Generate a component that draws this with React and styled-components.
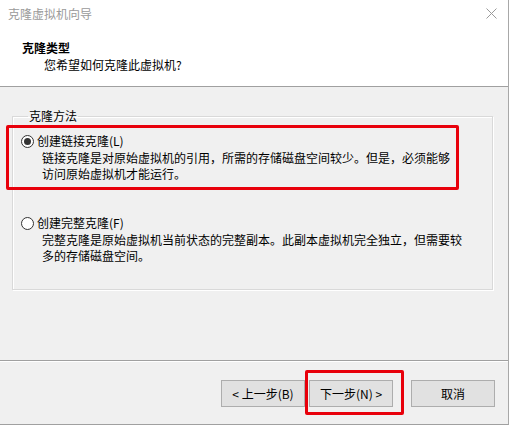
import React from "react";
import styled, { createGlobalStyle } from "styled-components";

const GlobalStyle = createGlobalStyle`
  html, body {
    margin: 0;
    padding: 0;
    background: #ffffff;
  }
  body {
    font-family: "Noto Sans CJK SC", "Microsoft YaHei", sans-serif;
    font-size: 12px;
    color: #000;
  }
`;

const options = [
  {
    id: "linked",
    label: "创建链接克隆(L)",
    lines: [
      "链接克隆是对原始虚拟机的引用，所需的存储磁盘空间较少。但是，必须能够",
      "访问原始虚拟机才能运行。",
    ],
    checked: true,
  },
  {
    id: "full",
    label: "创建完整克隆(F)",
    lines: [
      "完整克隆是原始虚拟机当前状态的完整副本。此副本虚拟机完全独立，但需要较",
      "多的存储磁盘空间。",
    ],
    checked: false,
  },
];

function App() {
  return (
    <>
      <GlobalStyle />
      <Window>
        <TitleBar>
          <Title>克隆虚拟机向导</Title>
          <CloseBtn>
            <svg width="11" height="11" viewBox="0 0 11 11">
              <path d="M0.5 0.5 L10.5 10.5 M10.5 0.5 L0.5 10.5" stroke="#9a9a9a" strokeWidth="1" fill="none" />
            </svg>
          </CloseBtn>
        </TitleBar>
        <Header>
          <Heading>克隆类型</Heading>
          <SubHeading>您希望如何克隆此虚拟机?</SubHeading>
        </Header>
        <Body>
          <Group>
            <Legend>克隆方法</Legend>
            <OptionList>
              {options.map((opt) => (
                <Option key={opt.id}>
                  <OptionHead>
                    <Radio $checked={opt.checked} />
                    <span>{opt.label}</span>
                  </OptionHead>
                  <Desc>
                    {opt.lines.map((l) => (
                      <DescLine key={l}>{l}</DescLine>
                    ))}
                  </Desc>
                </Option>
              ))}
            </OptionList>
          </Group>
        </Body>
        <Footer>
          <NavPair>
            <Button>&lt; 上一步(B)</Button>
            <Button>下一步(N) &gt;</Button>
          </NavPair>
          <Button>取消</Button>
        </Footer>
        <Mark $left={6} $top={125} $width={453} $height={65} />
        <Mark $left={305} $top={370} $width={99} $height={45} />
      </Window>
    </>
  );
}

const Window = styled.div`
  position: relative;
  width: 508px;
  height: 424px;
  border-right: 1px solid #a8a8a8;
  border-bottom: 1px solid #a0a0a0;
  background: #f0f0f0;
  display: flex;
  flex-direction: column;
`;

const TitleBar = styled.div`
  height: 30px;
  background: #fff;
  display: flex;
  align-items: center;
  justify-content: space-between;
  padding: 0 11px 3px 8px;
  box-sizing: border-box;
`;

const Title = styled.span`
  color: #9a9a9a;
  font-size: 12px;
  line-height: 16px;
`;

const CloseBtn = styled.span`
  display: flex;
  align-items: center;
`;

const Header = styled.div`
  height: 57px;
  background: #fff;
  box-sizing: border-box;
  padding: 10px 0 0 22px;
  border-bottom: 1px solid #a0a0a0;
`;

const Heading = styled.div`
  font-weight: bold;
  line-height: 16px;
`;

const SubHeading = styled.div`
  line-height: 16px;
  padding-left: 22px;
  margin-top: 1px;
`;

const Body = styled.div`
  height: 274px;
  box-sizing: border-box;
  padding: 21px 0 0 12px;
  border-bottom: 1px solid #a0a0a0;
`;

const Group = styled.fieldset`
  margin: 0;
  width: 481px;
  height: 182px;
  box-sizing: border-box;
  padding: 9px 0 0 8px;
  border: 1px solid #d9d9d9;
  box-shadow: inset 1px 1px 0 #fff, 1px 1px 0 #fff;
`;

const Legend = styled.legend`
  padding: 0 1px;
  margin-left: 7px;
  line-height: 16px;
`;

const OptionList = styled.div`
  display: flex;
  flex-direction: column;
  gap: 33px;
`;

const Option = styled.div`
  display: flex;
  flex-direction: column;
`;

const OptionHead = styled.div`
  display: flex;
  align-items: center;
  gap: 3px;
  line-height: 16px;
`;

const Radio = styled.span`
  width: 13px;
  height: 13px;
  box-sizing: border-box;
  border: 1px solid #333;
  border-radius: 50%;
  background: #fff;
  display: flex;
  align-items: center;
  justify-content: center;
  &::after {
    content: "";
    width: 7px;
    height: 7px;
    border-radius: 50%;
    background: ${(p) => (p.$checked ? "#333" : "transparent")};
  }
`;

const Desc = styled.div`
  padding-left: 21px;
  margin-top: 1px;
`;

const DescLine = styled.div`
  line-height: 16px;
  white-space: nowrap;
`;

const Footer = styled.div`
  flex: 1;
  border-top: 1px solid #fff;
  display: flex;
  align-items: flex-start;
  justify-content: flex-end;
  gap: 18px;
  padding: 18px 13px 0 0;
`;

const NavPair = styled.div`
  display: flex;
  gap: 4px;
`;

const Button = styled.button`
  width: 84px;
  height: 27px;
  box-sizing: border-box;
  background: #e1e1e1;
  border: 1px solid #adadad;
  border-radius: 0;
  font-family: "Noto Sans CJK SC", sans-serif;
  font-size: 12px;
  color: #000;
  padding: 0;
`;

const Mark = styled.div`
  position: absolute;
  left: ${(p) => p.$left}px;
  top: ${(p) => p.$top}px;
  width: ${(p) => p.$width}px;
  height: ${(p) => p.$height}px;
  box-sizing: border-box;
  border: 3px solid #e8000b;
  border-radius: 2px;
  pointer-events: none;
`;

export default App;
